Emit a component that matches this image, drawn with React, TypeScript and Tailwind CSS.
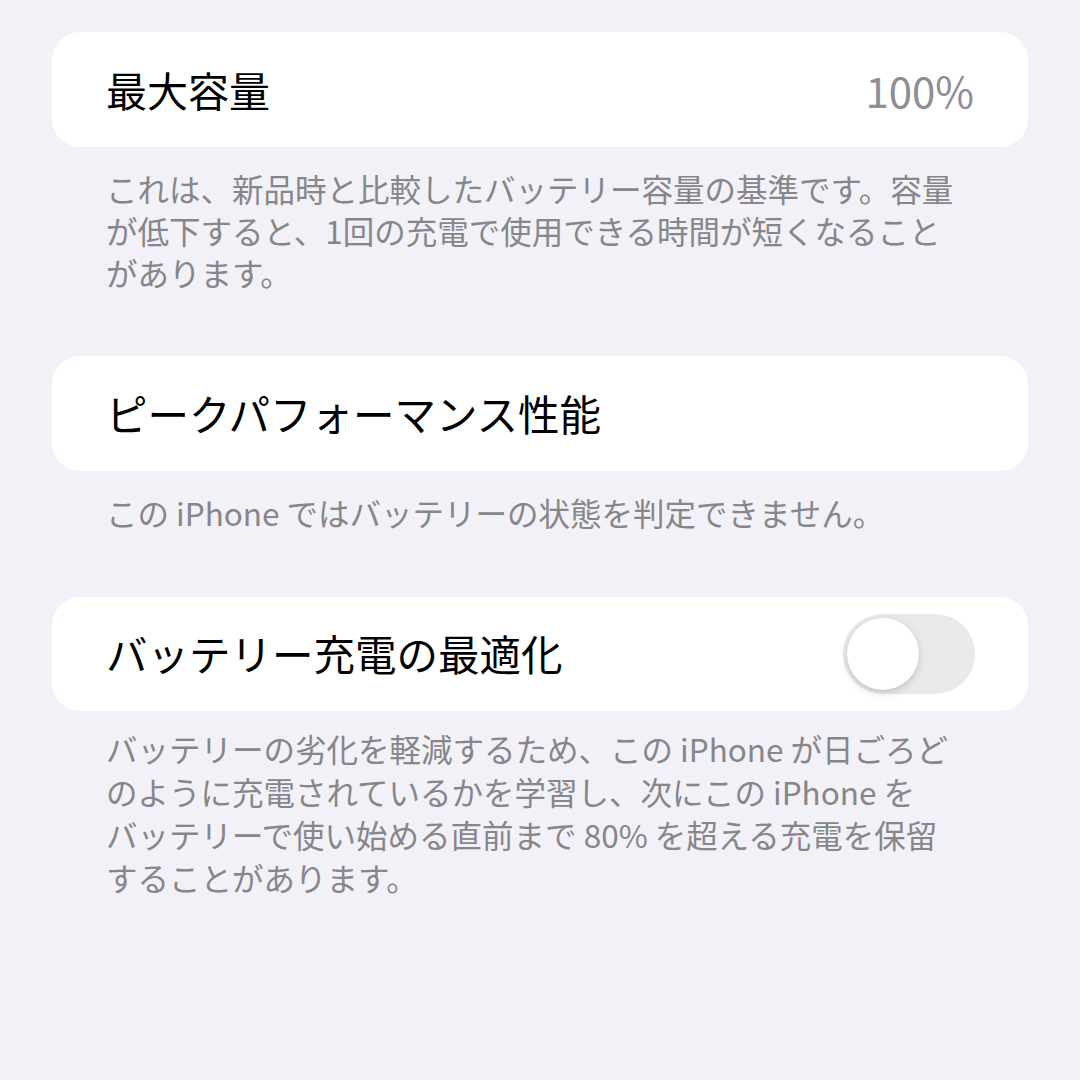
import React from "react";

const font = { fontFamily: '"Noto Sans CJK JP", "Noto Sans", sans-serif' };

function Card({ children }: { children: React.ReactNode }) {
  return (
    <div className="flex h-[115px] items-center justify-between rounded-[28px] bg-white pl-[54px] pr-[54px]">
      {children}
    </div>
  );
}

function Footer({ children }: { children: React.ReactNode }) {
  return (
    <p className="whitespace-nowrap pl-[54px] pt-[20px] text-[31.5px] leading-[42px] text-[#86868b]">
      {children}
    </p>
  );
}

export default function App() {
  return (
    <div
      className="h-[1080px] w-[1080px] overflow-hidden bg-[#f2f1f7] px-[52px] pt-[32px]"
      style={font}
    >
      <Card>
        <span className="text-[41px] leading-none text-black">最大容量</span>
        <span className="text-[42px] leading-none text-[#8e8e93]">100%</span>
      </Card>
      <Footer>
        これは、新品時と比較したバッテリー容量の基準です。容量
        <br />
        が低下すると、1回の充電で使用できる時間が短くなること
        <br />
        があります。
      </Footer>

      <div className="mt-[63px]">
        <Card>
          <span className="text-[41.5px] leading-none text-black">ピークパフォーマンス性能</span>
        </Card>
      </div>
      <Footer>この iPhone ではバッテリーの状態を判定できません。</Footer>

      <div className="mt-[64px]">
        <div className="flex h-[114px] items-center justify-between rounded-[28px] bg-white pl-[54px] pr-[53px]">
          <span className="text-[41.5px] leading-none text-black">バッテリー充電の最適化</span>
          <div className="flex h-[80px] w-[132px] items-center rounded-full bg-[#e9e9eb] pl-[4px]">
            <div className="h-[72px] w-[72px] rounded-full bg-white shadow-[0_3px_8px_rgba(0,0,0,0.15),0_1px_1px_rgba(0,0,0,0.06)]" />
          </div>
        </div>
      </div>
      <p className="whitespace-nowrap pl-[54px] pt-[16px] text-[31.5px] leading-[43px] text-[#86868b]">
        バッテリーの劣化を軽減するため、この iPhone が日ごろど
        <br />
        のように充電されているかを学習し、次にこの iPhone を
        <br />
        バッテリーで使い始める直前まで 80% を超える充電を保留
        <br />
        することがあります。
      </p>
    </div>
  );
}
